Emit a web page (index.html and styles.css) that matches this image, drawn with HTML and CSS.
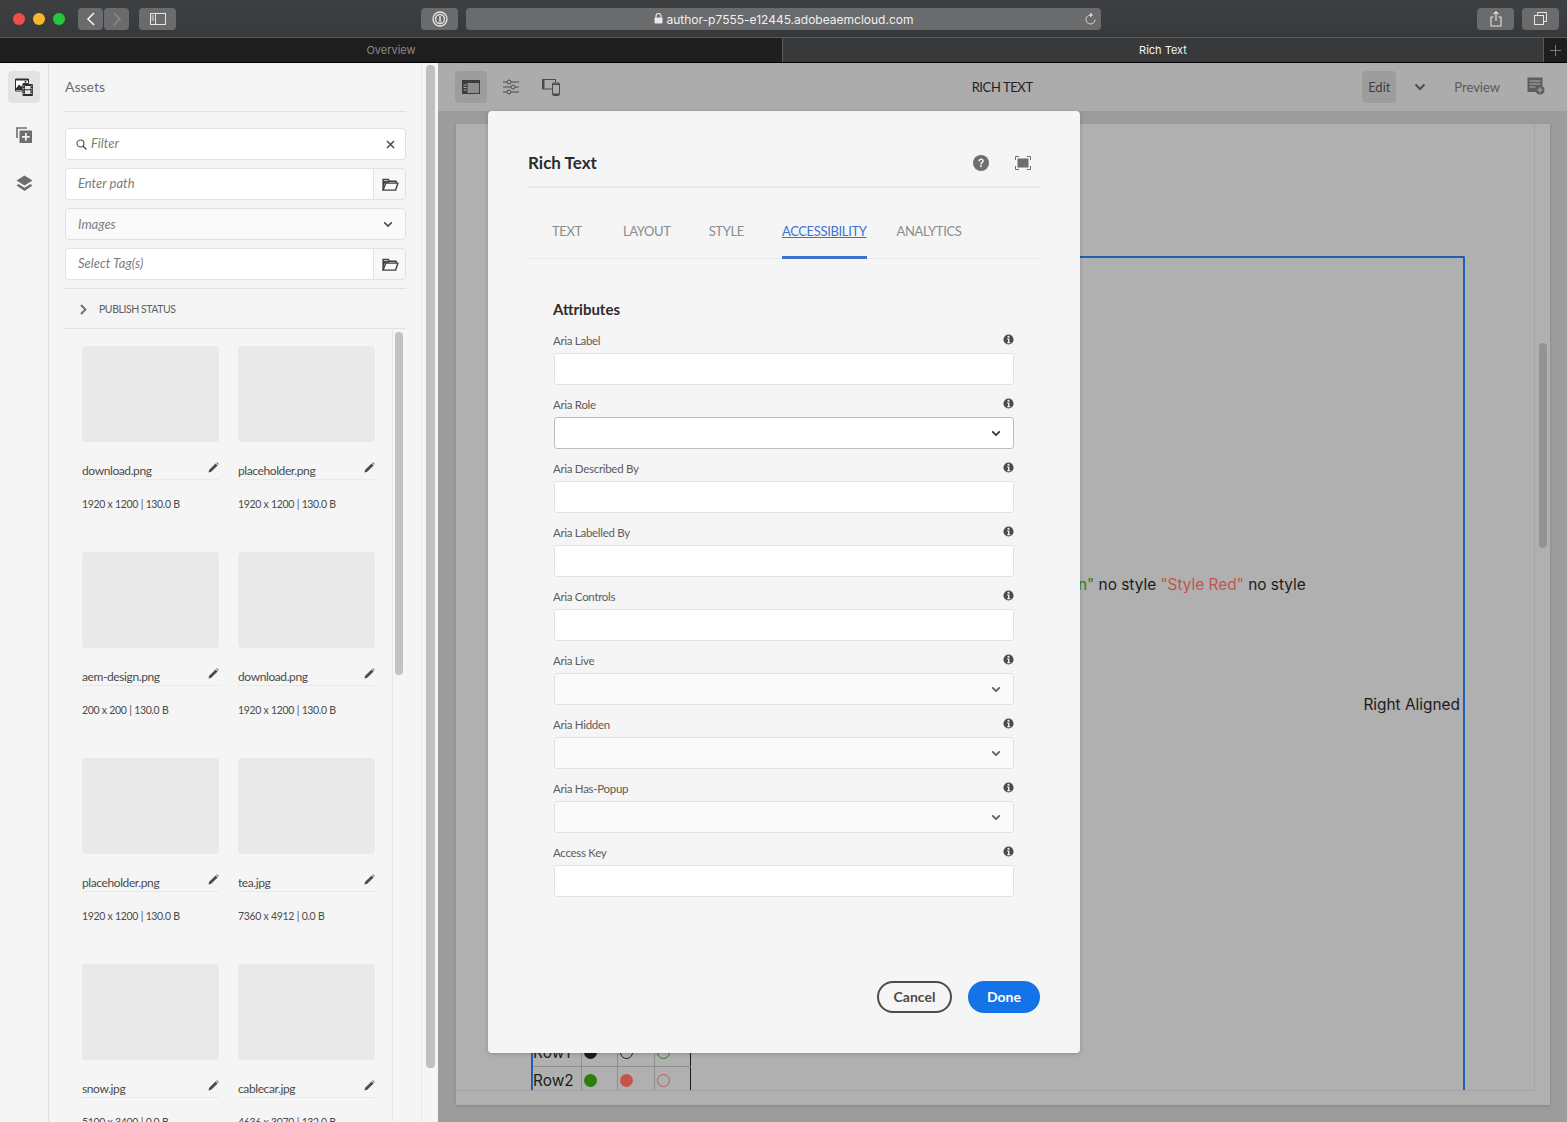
FILE: index.html

```html
<!DOCTYPE html>
<html>
<head>
	<title>Rich Text</title>
	<link rel="stylesheet" href="styles.css">
</head>
<body>

	<svg class="sprites" width="0" height="0">
		<symbol id="folder" viewBox="0 0 18 14"><path d="M1 13V1.500h5.500l1.500 2h7v2" fill="none" stroke="currentColor" stroke-width="1.500"/><path d="M1 13l3-7.500h13L14.500 13z" fill="none" stroke="currentColor" stroke-width="1.500"/><path d="M1 3h6l1 2H3L1 10z" fill="currentColor"/></symbol>
		<symbol id="chevron" viewBox="0 0 12 8"><path d="M1.500 1.500L6 6l4.500-4.500" fill="none" stroke="currentColor" stroke-width="2"/></symbol>
		<symbol id="pencil" viewBox="0 0 12 12"><path d="M0.500 11.500l0.800-3L8.300 1.500l2.200 2.200-7 7zM9 0.800l0.700-0.500 2 2-0.500 0.700z" fill="currentColor"/></symbol>
		<symbol id="info" viewBox="0 0 12 12"><circle cx="6" cy="6" r="5.500" fill="currentColor"/><rect x="5" y="2" width="2" height="2" fill="#f5f5f5"/><path d="M4.500 5H7v4h1v1H4.500V9h1V6h-1z" fill="#f5f5f5"/></symbol>
	</svg>

	<!-- safari window chrome -->
	<div class="toolbar">
		<div class="lights">
			<span class="light red"></span>
			<span class="light yellow"></span>
			<span class="light green"></span>
		</div>
		<div class="nav-group">
			<button class="tbtn nav"><svg width="10" height="14" viewBox="0 0 10 14"><path d="M8 1L2 7l6 6" fill="none" stroke="#f2f2f2" stroke-width="1.600"/></svg></button>
			<button class="tbtn nav"><svg width="10" height="14" viewBox="0 0 10 14"><path d="M2 1l6 6-6 6" fill="none" stroke="#8a8a8a" stroke-width="1.600"/></svg></button>
		</div>
		<button class="tbtn sidebar-btn"><svg width="16" height="12" viewBox="0 0 16 12"><rect x="0.500" y="0.500" width="15" height="11" fill="none" stroke="#e6e6e6"/><path d="M5.500 0.500v11M1.500 3h2.500M1.500 5h2.500M1.500 7h2.500" stroke="#e6e6e6" fill="none"/></svg></button>
		<button class="tbtn pw-btn"><svg width="16" height="16" viewBox="0 0 16 16"><circle cx="8" cy="8" r="7" fill="none" stroke="#e6e6e6" stroke-width="1.300"/><circle cx="8" cy="8" r="4.500" fill="none" stroke="#e6e6e6" stroke-width="1.300"/><rect x="7.300" y="5" width="1.400" height="6" fill="#e6e6e6"/></svg></button>
		<div class="address">
			<svg class="lock" width="9" height="11" viewBox="0 0 9 11"><rect x="0.500" y="4.500" width="8" height="6" rx="1" fill="#e8e8e8"/><path d="M2 5V3a2.500 2.500 0 0 1 5 0v2" fill="none" stroke="#e8e8e8" stroke-width="1.200"/></svg>
			<span class="url">author-p7555-e12445.adobeaemcloud.com</span>
			<svg class="reload" width="12" height="14" viewBox="0 0 12 14"><path d="M6.500 3A4.500 4.500 0 1 0 11 7.500" fill="none" stroke="#d8d8d8" stroke-width="1"/><path d="M6 0.500l3 2.500-3 2.500z" fill="#d8d8d8"/></svg>
		</div>
		<button class="tbtn right-btn"><svg width="12" height="16" viewBox="0 0 12 16"><path d="M3.500 6H1v9h10V6H8.500M6 10V1M3.500 3.200L6 0.800l2.500 2.400" fill="none" stroke="#e6e6e6" stroke-width="1.100"/></svg></button>
		<button class="tbtn right-btn"><svg width="13" height="13" viewBox="0 0 13 13"><rect x="0.500" y="3.500" width="9" height="9" fill="none" stroke="#e6e6e6"/><path d="M3.500 3.500v-3h9v9h-3" fill="none" stroke="#e6e6e6"/></svg></button>
	</div>

	<div class="tabbar">
		<div class="tab tab-off">Overview</div>
		<div class="tab tab-on">Rich Text</div>
		<div class="tab-add"><svg width="11" height="11" viewBox="0 0 11 11"><path d="M5.500 0v11M0 5.500h11" stroke="#7b7b7b" fill="none"/></svg></div>
	</div>

	<div class="app">

		<!-- left rail -->
		<div class="rail">
			<div class="rail-btn rail-on">
				<svg width="18" height="18" viewBox="0 0 18 18"><path d="M0.500 1h13v4.500H8V13H0.500z" fill="#fff" stroke="#2f2f2f"/><path d="M1 10.500l3-4 2 2 1-1v4.500H1z" fill="#2f2f2f"/><path d="M1 1h12v1.500H1z" fill="#2f2f2f"/><circle cx="10.500" cy="3.700" r="1" fill="#2f2f2f"/><rect x="7.500" y="6" width="10.500" height="12" rx="1" fill="#2f2f2f"/><path d="M10 8h5.500v3.300H10zM10 12.300h5.500v3.700H10z" fill="#e6e6e6"/><path d="M8.300 7.500h1v1h-1zM8.300 10h1v1h-1zM8.300 12.500h1v1h-1zM8.300 15h1v1h-1zM16.300 7.500h1v1h-1zM16.300 10h1v1h-1zM16.300 12.500h1v1h-1zM16.300 15h1v1h-1z" fill="#e6e6e6"/></svg>
			</div>
			<div class="rail-btn">
				<svg width="16" height="16" viewBox="0 0 16 16"><path d="M1 11V1h10" fill="none" stroke="#6e6e6e" stroke-width="1.600"/><rect x="3.500" y="3.500" width="12.500" height="12.500" fill="#6e6e6e"/><path d="M9 6h1.700v3h3v1.700h-3v3H9v-3H6V9h3z" fill="#f5f5f5"/></svg>
			</div>
			<div class="rail-btn">
				<svg width="17" height="17" viewBox="0 0 17 17"><path d="M8.500 0.500l8 5-8 5-8-5z" fill="#6e6e6e"/><path d="M2.500 9l6 3.700 6-3.700 2 1.500-8 5.500-8-5.500z" fill="#6e6e6e"/></svg>
			</div>
		</div>

		<!-- assets panel -->
		<div class="panel">
			<div class="panel-title">Assets</div>
			<div class="filters">
				<div class="field filter">
					<svg width="11" height="11" viewBox="0 0 11 11"><circle cx="4.500" cy="4.500" r="3.500" fill="none" stroke="#4b4b4b" stroke-width="1.100"/><path d="M7 7l3.500 3.500" stroke="#4b4b4b" stroke-width="1.200"/></svg>
					<span class="hint hint-up">Filter</span>
					<svg class="clear" width="9" height="9" viewBox="0 0 9 9"><path d="M1 1l7 7M8 1L1 8" stroke="#4b4b4b" stroke-width="1.500"/></svg>
				</div>
				<div class="field-group">
					<div class="field"><span class="hint hint-up">Enter path</span></div>
					<div class="field-btn"><svg width="17" height="13"><use href="#folder"/></svg></div>
				</div>
				<div class="field picker">
					<span class="hint">Images</span>
					<svg width="10" height="7"><use href="#chevron"/></svg>
				</div>
				<div class="field-group">
					<div class="field"><span class="hint hint-up">Select Tag(s)</span></div>
					<div class="field-btn"><svg width="17" height="13"><use href="#folder"/></svg></div>
				</div>
			</div>
			<div class="publish">
				<svg width="7" height="11" viewBox="0 0 7 11"><path d="M1 1l4.500 4.500L1 10" fill="none" stroke="#6e6e6e" stroke-width="1.800"/></svg>
				<span>PUBLISH STATUS</span>
			</div>
			<div class="results">
				<div class="cards">
					<div class="card"><div class="thumb"></div><div class="card-name"><span>download.png</span><svg width="11" height="11"><use href="#pencil"/></svg></div><div class="card-meta">1920 x 1200 | 130.0 B</div></div>
					<div class="card"><div class="thumb"></div><div class="card-name"><span>placeholder.png</span><svg width="11" height="11"><use href="#pencil"/></svg></div><div class="card-meta">1920 x 1200 | 130.0 B</div></div>
					<div class="card"><div class="thumb"></div><div class="card-name"><span>aem-design.png</span><svg width="11" height="11"><use href="#pencil"/></svg></div><div class="card-meta">200 x 200 | 130.0 B</div></div>
					<div class="card"><div class="thumb"></div><div class="card-name"><span>download.png</span><svg width="11" height="11"><use href="#pencil"/></svg></div><div class="card-meta">1920 x 1200 | 130.0 B</div></div>
					<div class="card"><div class="thumb"></div><div class="card-name"><span>placeholder.png</span><svg width="11" height="11"><use href="#pencil"/></svg></div><div class="card-meta">1920 x 1200 | 130.0 B</div></div>
					<div class="card"><div class="thumb"></div><div class="card-name"><span>tea.jpg</span><svg width="11" height="11"><use href="#pencil"/></svg></div><div class="card-meta">7360 x 4912 | 0.0 B</div></div>
					<div class="card"><div class="thumb"></div><div class="card-name"><span>snow.jpg</span><svg width="11" height="11"><use href="#pencil"/></svg></div><div class="card-meta">5100 x 3400 | 0.0 B</div></div>
					<div class="card"><div class="thumb"></div><div class="card-name"><span>cablecar.jpg</span><svg width="11" height="11"><use href="#pencil"/></svg></div><div class="card-meta">4636 x 3070 | 132.0 B</div></div>
				</div>
				<div class="results-track"><div class="results-thumb"></div></div>
			</div>
		</div>
		<div class="panel-track"><div class="panel-thumb"></div></div>

		<!-- editor, dimmed behind the dialog -->
		<div class="editor">
			<div class="editor-bar">
				<div class="bar-btn bar-on">
					<svg width="18" height="14" viewBox="0 0 18 14"><rect x="0.500" y="0.500" width="17" height="13" fill="#8d8d8d" stroke="#3c3c3c"/><path d="M0.500 0.500h17v2.500h-17zM0.500 3h5v10.500h-5z" fill="#3c3c3c"/><path d="M1.500 5h3M1.500 7.500h3M1.500 10h3" stroke="#ababab"/></svg>
				</div>
				<div class="bar-btn">
					<svg width="16" height="16" viewBox="0 0 16 16"><path d="M0 3h4M8 3h8M0 8h8M12 8h4M0 13h4M8 13h8" stroke="#4a4a4a" fill="none"/><circle cx="6" cy="3" r="2" fill="none" stroke="#4a4a4a"/><circle cx="10" cy="8" r="2" fill="none" stroke="#4a4a4a"/><circle cx="6" cy="13" r="2" fill="none" stroke="#4a4a4a"/></svg>
				</div>
				<div class="bar-btn">
					<svg width="20" height="18" viewBox="0 0 20 18"><path d="M11 11H1.500V1.500h13V4" fill="none" stroke="#4a4a4a"/><path d="M1 1h2.500v10H1z" fill="#4a4a4a"/><rect x="11.500" y="5" width="7" height="12.500" rx="1" fill="none" stroke="#4a4a4a"/><path d="M12 5.500h6V7h-6zM12 15.500h6v1.500h-6z" fill="#4a4a4a"/></svg>
				</div>
				<div class="bar-title">RICH TEXT</div>
				<div class="bar-edit">Edit</div>
				<div class="bar-chev"><svg width="12" height="8"><use href="#chevron"/></svg></div>
				<div class="bar-preview">Preview</div>
				<div class="bar-note">
					<svg width="18" height="18" viewBox="0 0 18 18"><path d="M0.500 0.500h15V9a5 5 0 0 0-5 5v1H4l-3.500 0z" fill="#5e5e5e"/><path d="M2.500 4h11M2.500 7h11M2.500 10h6" stroke="#ababab" fill="none"/><circle cx="13" cy="13" r="4.500" fill="#5e5e5e"/><path d="M13 10.500v5M10.500 13h5" stroke="#ababab" stroke-width="1.200"/></svg>
				</div>
			</div>
			<div class="canvas-wrap">
				<div class="canvas">
					<div class="canvas-inner">
						<div class="frame">
							<p class="line-styled">no style <span class="style-green">"Style Green"</span> no style <span class="style-red">"Style Red"</span> no style</p>
							<p class="line-right">Right Aligned</p>
							<table class="dots">
								<tr><td>Row1</td><td><i class="dot solid-black"></i></td><td><i class="dot ring-black"></i></td><td><i class="dot ring-green"></i></td></tr>
								<tr><td>Row2</td><td><i class="dot solid-green"></i></td><td><i class="dot solid-red"></i></td><td><i class="dot ring-red"></i></td></tr>
							</table>
						</div>
					</div>
					<div class="canvas-track"><div class="canvas-thumb"></div></div>
				</div>
			</div>
		</div>
	</div>

	<!-- dialog -->
	<div class="dialog">
		<div class="dialog-head">
			<h2>Rich Text</h2>
			<svg class="help" width="16" height="16" viewBox="0 0 16 16"><circle cx="8" cy="8" r="8" fill="#6e6e6e"/><path d="M5.300 6.200C5.400 4.600 6.500 3.600 8.100 3.600c1.600 0 2.700 1 2.700 2.300 0 1.100-.6 1.700-1.400 2.200-.6.4-.8.700-.8 1.400H7.200c0-1.200.3-1.800 1.200-2.400.6-.4.8-.7.8-1.100 0-.6-.5-1-1.100-1-.7 0-1.200.5-1.200 1.200z" fill="#f5f5f5"/><rect x="7.100" y="10.300" width="1.600" height="1.800" fill="#f5f5f5"/></svg>
			<svg class="full" width="16" height="14" viewBox="0 0 16 14"><path d="M0.500 4V0.500H4M12 0.500h3.500V4M15.500 10v3.500H12M4 13.500H0.500V10" fill="none" stroke="#6e6e6e"/><rect x="2.500" y="2.500" width="11" height="9" fill="#6e6e6e"/></svg>
		</div>
		<div class="dialog-tabs">
			<span class="dtab">TEXT</span>
			<span class="dtab">LAYOUT</span>
			<span class="dtab">STYLE</span>
			<span class="dtab dtab-on">ACCESSIBILITY</span>
			<span class="dtab">ANALYTICS</span>
		</div>
		<div class="dialog-body">
			<h3>Attributes</h3>
			<div class="form-row"><div class="form-label"><label>Aria Label</label><svg width="11" height="11"><use href="#info"/></svg></div><div class="input"></div></div>
			<div class="form-row"><div class="form-label"><label>Aria Role</label><svg width="11" height="11"><use href="#info"/></svg></div><div class="input select select-open"><svg width="10" height="7"><use href="#chevron"/></svg></div></div>
			<div class="form-row"><div class="form-label"><label>Aria Described By</label><svg width="11" height="11"><use href="#info"/></svg></div><div class="input"></div></div>
			<div class="form-row"><div class="form-label"><label>Aria Labelled By</label><svg width="11" height="11"><use href="#info"/></svg></div><div class="input"></div></div>
			<div class="form-row"><div class="form-label"><label>Aria Controls</label><svg width="11" height="11"><use href="#info"/></svg></div><div class="input"></div></div>
			<div class="form-row"><div class="form-label"><label>Aria Live</label><svg width="11" height="11"><use href="#info"/></svg></div><div class="input select"><svg width="10" height="7"><use href="#chevron"/></svg></div></div>
			<div class="form-row"><div class="form-label"><label>Aria Hidden</label><svg width="11" height="11"><use href="#info"/></svg></div><div class="input select"><svg width="10" height="7"><use href="#chevron"/></svg></div></div>
			<div class="form-row"><div class="form-label"><label>Aria Has-Popup</label><svg width="11" height="11"><use href="#info"/></svg></div><div class="input select"><svg width="10" height="7"><use href="#chevron"/></svg></div></div>
			<div class="form-row"><div class="form-label"><label>Access Key</label><svg width="11" height="11"><use href="#info"/></svg></div><div class="input"></div></div>
		</div>
		<div class="dialog-foot">
			<button class="btn-cancel">Cancel</button>
			<button class="btn-done">Done</button>
		</div>
	</div>

</body>
</html>
```

FILE: styles.css

```css
html, body {
	height: 100%;
}

body {
	margin: 0;
	height: 1122px;
	overflow: hidden;
	position: relative;
	font-family: "Lato", "Open Sans", sans-serif;
	background-color: #9c9c9c;
}

.sprites {
	position: absolute;
}

button {
	font-family: inherit;
	padding: 0;
	border: 0;
}

/* safari chrome */

.toolbar {
	height: 37px;
	display: flex;
	align-items: center;
	padding: 0 8px 0 13px;
	background: linear-gradient(#3f4042, #37383a);
	border-bottom: 1px solid #5a5a5a;
}

.lights {
	display: flex;
	gap: 8px;
	margin-right: 13px;
}

.light {
	width: 12px;
	height: 12px;
	border-radius: 50%;
}

.red { background-color: #f14e4a; }
.yellow { background-color: #f8b72c; }
.green { background-color: #26c73f; }

.tbtn {
	height: 22px;
	flex-shrink: 0;
	display: flex;
	align-items: center;
	justify-content: center;
	background-color: #6a6b6d;
	border-radius: 4px;
}

.nav-group {
	display: flex;
	gap: 1px;
	margin-right: 10px;
}

.nav {
	width: 25px;
}

.sidebar-btn {
	width: 37px;
	margin-right: 245px;
}

.pw-btn {
	width: 37px;
	margin-right: 8px;
}

.address {
	width: 635px;
	height: 22px;
	flex-shrink: 0;
	display: flex;
	align-items: center;
	justify-content: center;
	gap: 4px;
	position: relative;
	background-color: #6a6b6d;
	border-radius: 4px;
	color: #f0f0f0;
	font-family: "Inter", "Liberation Sans", sans-serif;
	font-size: 12px;
	margin-right: 376px;
}

.url {
	margin-top: 1px;
}

.reload {
	position: absolute;
	right: 5px;
	top: 4px;
}

.right-btn {
	width: 37px;
	margin-right: 8px;
}

.right-btn:last-child {
	margin-right: 0;
}

.tabbar {
	height: 24px;
	display: flex;
	background-color: #1e1e1e;
	border-bottom: 1px solid #000;
	font-family: "Inter", "Liberation Sans", sans-serif;
	font-size: 11px;
}

.tab {
	display: flex;
	align-items: center;
	justify-content: center;
}

.tab-off {
	width: 782px;
	color: #8a8a8a;
}

.tab-on {
	width: 760px;
	color: #f4f4f4;
	background-color: #38393b;
	border-left: 1px solid #5a5a5a;
	border-right: 1px solid #5a5a5a;
}

.tab-add {
	flex: 1;
	display: flex;
	align-items: center;
	justify-content: center;
}

/* app */

.app {
	height: 1059px;
	display: flex;
}

.rail {
	width: 49px;
	flex-shrink: 0;
	display: flex;
	flex-direction: column;
	align-items: center;
	padding-top: 8px;
	box-sizing: border-box;
	background-color: #f5f5f5;
	border-right: 1px solid #e1e1e1;
}

.rail-btn {
	width: 32px;
	height: 32px;
	margin-bottom: 16px;
	display: flex;
	align-items: center;
	justify-content: center;
	border-radius: 4px;
}

.rail-on {
	background-color: #e3e3e3;
}

.panel {
	width: 373px;
	box-sizing: border-box;
	padding: 0 15px 0 16px;
	background-color: #f5f5f5;
	border-right: 1px solid #e8e8e8;
	flex-shrink: 0;
	display: flex;
	flex-direction: column;
}

.panel-title {
	height: 48px;
	margin-bottom: 16px;
	line-height: 48px;
	font-size: 14px;
	color: #6e6e6e;
	border-bottom: 1px solid #e1e1e1;
}

.filters {
	display: flex;
	flex-direction: column;
	gap: 8px;
	padding-bottom: 8px;
	border-bottom: 1px solid #e1e1e1;
}

.field {
	height: 30px;
	display: flex;
	align-items: center;
	padding: 0 12px;
	background-color: #fff;
	border: 1px solid #e1e1e1;
	border-radius: 4px;
	color: #4b4b4b;
}

.hint {
	font-size: 13px;
	font-style: italic;
	color: #7d7d7d;
}

.hint-up {
	padding-bottom: 2px;
}

.filter {
	padding: 0 7px 0 10px;
}

.filter .hint {
	margin-left: 4px;
	flex: 1;
}

.clear {
	margin-right: 3px;
}

.picker {
	justify-content: space-between;
	background-color: #fafafa;
	padding-right: 12px;
}

.field-group {
	display: flex;
}

.field-group .field {
	flex: 1;
	border-radius: 4px 0 0 4px;
	border-right: 0;
}

.field-btn {
	width: 31px;
	height: 30px;
	display: flex;
	align-items: center;
	justify-content: center;
	background-color: #f8f8f8;
	border: 1px solid #e1e1e1;
	border-radius: 0 4px 4px 0;
	color: #3c3c3c;
}

.field-btn svg {
	margin-left: 1px;
}

.publish {
	height: 39px;
	display: flex;
	align-items: center;
	gap: 12px;
	padding-left: 15px;
	font-size: 10.5px;
	letter-spacing: -0.45px;
	color: #5f5f5f;
	border-bottom: 1px solid #e1e1e1;
}

.publish svg {
	margin-top: 1px;
}

.results {
	flex: 1;
	display: flex;
	justify-content: space-between;
	overflow: hidden;
}

.cards {
	display: grid;
	grid-template-columns: 137px 137px;
	grid-auto-rows: 206px;
	column-gap: 19px;
	padding: 17px 0 0 17px;
}

.thumb {
	height: 96px;
	background-color: #e9e9e9;
	border-radius: 4px;
}

.card-name {
	height: 38px;
	box-sizing: border-box;
	display: flex;
	justify-content: space-between;
	padding-top: 21px;
	font-size: 12px;
	letter-spacing: -0.4px;
	line-height: 15px;
	color: #4b4b4b;
	border-bottom: 1px solid #e8e8e8;
}

.card-name svg {
	margin-top: -1px;
	color: #4b4b4b;
}

.card-meta {
	margin-top: 18px;
	font-size: 10.5px;
	letter-spacing: -0.35px;
	word-spacing: 0.3px;
	color: #4b4b4b;
}

.results-track {
	width: 14px;
	border-left: 1px solid #e8e8e8;
	box-sizing: border-box;
	padding: 3px 3px 0 2px;
}

.results-thumb {
	width: 8px;
	height: 343px;
	background-color: #c2c2c2;
	border-radius: 4px;
}

.panel-track {
	width: 16px;
	box-sizing: border-box;
	padding: 2px 3px 0 4px;
	background-color: #f5f5f5;
	flex-shrink: 0;
}

.panel-thumb {
	width: 9px;
	height: 1003px;
	background-color: #c0c0c0;
	border-radius: 4px;
}

/* editor behind the overlay */

.editor {
	flex: 1;
	display: flex;
	flex-direction: column;
	min-width: 0;
}

.editor-bar {
	height: 48px;
	flex-shrink: 0;
	display: flex;
	align-items: center;
	padding: 0 22px 0 17px;
	background-color: #acacac;
	color: #3c3c3c;
	font-size: 13px;
}

.bar-btn {
	width: 32px;
	height: 32px;
	margin-right: 8px;
	display: flex;
	align-items: center;
	justify-content: center;
	border-radius: 4px;
}

.bar-on {
	background-color: #9d9d9d;
}

.bar-title {
	flex: 1;
	text-align: center;
	color: #1f1f1f;
	letter-spacing: -0.4px;
	padding-left: 67px;
}

.bar-edit {
	width: 34px;
	height: 32px;
	line-height: 32px;
	text-align: center;
	background-color: #9d9d9d;
	border-radius: 4px;
	color: #3f3f3f;
}

.bar-chev {
	display: flex;
	margin: 0 28px 0 18px;
	color: #4c4c4c;
}

.bar-preview {
	color: #5a5a5a;
	margin-right: 27px;
}

.canvas-wrap {
	flex: 1;
	padding: 13px 17px 17px 18px;
	background-color: #9c9c9c;
	min-height: 0;
}

.canvas {
	height: 100%;
	box-sizing: border-box;
	padding-bottom: 14px;
	display: flex;
	background-color: #b0b0b0;
	box-shadow: 0 1px 3px rgba(0, 0, 0, 0.15);
}

.canvas-inner {
	flex: 1;
	min-width: 0;
	padding-left: 75px;
	padding-top: 132px;
	padding-right: 69px;
	border-bottom: 1px solid #a4a4a4;
	border-right: 1px solid #a4a4a4;
	overflow: hidden;
}

.frame {
	height: 100%;
	box-sizing: border-box;
	border: 2px solid #1d5fb4;
	border-bottom: 0;
	border-radius: 2px 2px 0 0;
	padding: 0 3px 0 0;
	display: flex;
	flex-direction: column;
	font-family: "Inter", "Liberation Sans", sans-serif;
	font-size: 15.4px;
	color: #1c1c1c;
}

.line-styled {
	margin: 317px 0 0 400px;
	white-space: nowrap;
}

.line-right {
	margin: 101px 0 0;
	text-align: right;
}

.style-green {
	color: #2f7d0c;
}

.style-red {
	color: #c4554d;
}

.dots {
	margin-top: auto;
	margin-bottom: -4px;
	border-collapse: collapse;
	width: 158px;
	flex-shrink: 0;
}

.dots td {
	height: 27px;
	padding: 0 0 0 2px;
	border: 1px solid #8f8f8f;
	border-left: 0;
	border-top: 0;
	text-align: left;
}

.dots td:first-child {
	padding-left: 0;
	width: 48px;
}

.dots td:nth-child(2) {
	border-left: 1px solid #8f8f8f;
}

.dots td:last-child {
	border-right: 1px solid #1c1c1c;
}

.dots tr:last-child td {
	border-bottom: 0;
}

.dot {
	display: inline-block;
	width: 13px;
	height: 13px;
	margin-top: -2px;
	box-sizing: border-box;
	border-radius: 50%;
	vertical-align: middle;
}

.solid-black { background-color: #1c1c1c; }
.ring-black { border: 1.5px solid #1c1c1c; }
.ring-green { border: 1.5px solid #2f7d0c; }
.solid-green { background-color: #2f7d0c; }
.solid-red { background-color: #c4554d; }
.ring-red { border: 1.5px solid #c4554d; }

.canvas-track {
	width: 15px;
	flex-shrink: 0;
	padding: 219px 3px 0 4px;
	box-sizing: border-box;
}

.canvas-thumb {
	width: 8px;
	height: 205px;
	background-color: #939393;
	border-radius: 4px;
}

/* dialog */

.dialog {
	position: absolute;
	left: 488px;
	top: 111px;
	width: 592px;
	height: 942px;
	box-sizing: border-box;
	padding: 0 40px;
	display: flex;
	flex-direction: column;
	background-color: #f5f5f5;
	border-radius: 4px;
	box-shadow: 0 1px 4px rgba(0, 0, 0, 0.2);
}

.dialog-head {
	height: 75px;
	flex-shrink: 0;
	display: flex;
	align-items: center;
	gap: 26px;
	padding-right: 9px;
	border-bottom: 2px solid #eaeaea;
}

.dialog-head h2 {
	flex: 1;
	margin: 0;
	font-size: 17px;
	font-weight: 700;
	color: #2c2c2c;
	padding-top: 27px;
}

.dialog-head svg {
	margin-top: 29px;
}

.dialog-tabs {
	height: 71px;
	flex-shrink: 0;
	box-sizing: border-box;
	display: flex;
	gap: 38px;
	padding: 0 0 0 24px;
	border-bottom: 1px solid #e8e8e8;
}

.dtab {
	font-size: 13px;
	letter-spacing: -0.35px;
	line-height: 87px;
	height: 71px;
	box-sizing: border-box;
	color: #8c8c8c;
}

.dtab:first-child {
	margin-right: 3px;
}

.dtab:nth-child(4) {
	margin-right: -8px;
}

.dtab-on {
	color: #3e72d0;
	text-decoration: underline;
	border-bottom: 3px solid #3e72d0;
}

.dialog-body {
	padding: 38px 26px 0 25px;
}

.dialog-body h3 {
	margin: 0 0 11px;
	font-size: 15px;
	line-height: 24px;
	font-weight: 700;
	color: #2c2c2c;
}

.form-row {
	height: 64px;
}

.form-label {
	display: flex;
	justify-content: space-between;
	height: 22px;
	font-size: 11.5px;
	letter-spacing: -0.3px;
	color: #5c5c5c;
}

.form-label label {
	padding-top: 2px;
}

.form-label svg {
	color: #4b4b4b;
	margin-top: 1.5px;
}

.input {
	margin-left: 1px;
	margin-top: -1px;
	height: 30px;
	display: flex;
	align-items: center;
	justify-content: flex-end;
	padding-right: 12px;
	background-color: #fff;
	border: 1px solid #e1e1e1;
	border-radius: 3px;
	color: #555;
}

.select {
	background-color: #fafafa;
}

.select-open {
	background-color: #fff;
	border-color: #bdbdbd;
	color: #2c2c2c;
}

.dialog-foot {
	margin-top: auto;
	padding-bottom: 40px;
	display: flex;
	justify-content: flex-end;
	gap: 16px;
}

.dialog-foot button {
	height: 32px;
	border-radius: 16px;
	font-size: 14px;
	font-weight: 700;
	padding-bottom: 2px;
}

.btn-cancel {
	width: 75px;
	background-color: transparent;
	border: 2px solid #4b4b4b;
	color: #4b4b4b;
}

.btn-done {
	width: 72px;
	background-color: #1473e6;
	color: #fff;
}
```
